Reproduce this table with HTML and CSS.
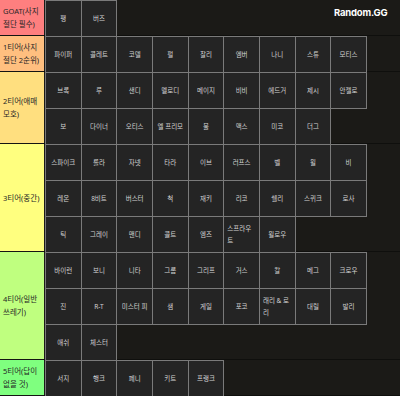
FILE: index.html
```html
<!DOCTYPE html>
<html lang="ko">
<head>
<meta charset="utf-8">
<link rel="stylesheet" href="styles.css">
</head>
<body>
<div class="board">
  <div class="tier">
    <div class="label t-goat">GOAT(사지 절단 필수)</div>
    <div class="items">
      <div class="cell"><span>팽</span></div>
      <div class="cell"><span>버즈</span></div>
    </div>
  </div>
  <div class="tier">
    <div class="label t-1">1티어(사지 절단 2순위)</div>
    <div class="items">
      <div class="cell"><span>파이퍼</span></div>
      <div class="cell"><span>콜레트</span></div>
      <div class="cell"><span>코델</span></div>
      <div class="cell"><span>펄</span></div>
      <div class="cell"><span>찰리</span></div>
      <div class="cell"><span>엠버</span></div>
      <div class="cell"><span>나니</span></div>
      <div class="cell"><span>스튜</span></div>
      <div class="cell"><span>모티스</span></div>
    </div>
  </div>
  <div class="tier">
    <div class="label t-2">2티어(애매 모호)</div>
    <div class="items">
      <div class="cell"><span>브록</span></div>
      <div class="cell"><span>루</span></div>
      <div class="cell"><span>샌디</span></div>
      <div class="cell"><span>멜로디</span></div>
      <div class="cell"><span>메이지</span></div>
      <div class="cell"><span>비비</span></div>
      <div class="cell"><span>에드거</span></div>
      <div class="cell"><span>제시</span></div>
      <div class="cell"><span>안젤로</span></div>
      <div class="cell"><span>보</span></div>
      <div class="cell"><span>다이너</span></div>
      <div class="cell"><span>오티스</span></div>
      <div class="cell"><span>엘 프리모</span></div>
      <div class="cell"><span>불</span></div>
      <div class="cell"><span>맥스</span></div>
      <div class="cell"><span>미코</span></div>
      <div class="cell"><span>더그</span></div>
    </div>
  </div>
  <div class="tier">
    <div class="label t-3">3티어(중간)</div>
    <div class="items">
      <div class="cell"><span>스파이크</span></div>
      <div class="cell"><span>롤라</span></div>
      <div class="cell"><span>자넷</span></div>
      <div class="cell"><span>타라</span></div>
      <div class="cell"><span>이브</span></div>
      <div class="cell"><span>러프스</span></div>
      <div class="cell"><span>벨</span></div>
      <div class="cell"><span>윌</span></div>
      <div class="cell"><span>비</span></div>
      <div class="cell"><span>레온</span></div>
      <div class="cell"><span>8비트</span></div>
      <div class="cell"><span>버스터</span></div>
      <div class="cell"><span>척</span></div>
      <div class="cell"><span>재키</span></div>
      <div class="cell"><span>리코</span></div>
      <div class="cell"><span>쉘리</span></div>
      <div class="cell"><span>스퀴크</span></div>
      <div class="cell"><span>로사</span></div>
      <div class="cell"><span>틱</span></div>
      <div class="cell"><span>그레이</span></div>
      <div class="cell"><span>맨디</span></div>
      <div class="cell"><span>콜트</span></div>
      <div class="cell"><span>엠즈</span></div>
      <div class="cell"><span>스프라우트</span></div>
      <div class="cell"><span>윌로우</span></div>
    </div>
  </div>
  <div class="tier">
    <div class="label t-4">4티어(일반 쓰레기)</div>
    <div class="items">
      <div class="cell"><span>바이런</span></div>
      <div class="cell"><span>보니</span></div>
      <div class="cell"><span>니타</span></div>
      <div class="cell"><span>그롬</span></div>
      <div class="cell"><span>그리프</span></div>
      <div class="cell"><span>거스</span></div>
      <div class="cell"><span>칼</span></div>
      <div class="cell"><span>메그</span></div>
      <div class="cell"><span>크로우</span></div>
      <div class="cell"><span>진</span></div>
      <div class="cell"><span>R-T</span></div>
      <div class="cell"><span>미스터 피</span></div>
      <div class="cell"><span>샘</span></div>
      <div class="cell"><span>게일</span></div>
      <div class="cell"><span>포코</span></div>
      <div class="cell"><span>래리 &amp; 로리</span></div>
      <div class="cell"><span>대릴</span></div>
      <div class="cell"><span>발리</span></div>
      <div class="cell"><span>애쉬</span></div>
      <div class="cell"><span>체스터</span></div>
    </div>
  </div>
  <div class="tier">
    <div class="label t-5">5티어(답이 없을 것)</div>
    <div class="items">
      <div class="cell"><span>서지</span></div>
      <div class="cell"><span>행크</span></div>
      <div class="cell"><span>페니</span></div>
      <div class="cell"><span>키트</span></div>
      <div class="cell"><span>프랭크</span></div>
    </div>
  </div>
  <div class="brand">Random.GG</div>
</div>
</body>
</html>
```

FILE: styles.css
```css
html, body {
  margin: 0;
  padding: 0;
  background: #1b1a17;
}
body {
  width: 400px;
  height: 396px;
  overflow: hidden;
  font-family: "Noto Sans", "Noto Sans CJK KR", sans-serif;
}
.board {
  position: relative;
  width: 400px;
  height: 396px;
}
.tier {
  display: flex;
  background: linear-gradient(to top, #0f0f0d 1px, transparent 1px);
}
.label {
  width: 44px;
  box-sizing: border-box;
  padding: 0 3px;
  display: flex;
  align-items: center;
  font-size: 7.5px;
  line-height: 1.7;
  color: #262626;
  box-shadow: inset 0 -1px 0 #141412;
  word-break: keep-all;
}
.t-goat { background: #fe7f7f; }
.t-1 { background: #ffbf7f; }
.t-2 { background: #ffdf7f; }
.t-3 { background: #ffff7f; }
.t-4 { background: #bfff7f; }
.t-5 { background: #7fff7f; }
.items {
  margin-left: 1px;
  width: 322px;
  display: flex;
  flex-wrap: wrap;
  align-content: flex-start;
}
.cell {
  width: 36.67px;
  height: 37px;
  box-sizing: border-box;
  margin: 0 -1px -1px 0;
  border: 1px solid #7a7a7a;
  background: #242424;
  display: flex;
  align-items: center;
  justify-content: center;
  padding: 0 3px;
  font-size: 6.5px;
  line-height: 1.7;
  color: #d2d2d2;
}
.cell span {
  text-align: left;
}
.brand {
  position: absolute;
  top: 7px;
  left: 334px;
  font-family: Inter, "Noto Sans", sans-serif;
  font-weight: 700;
  font-size: 9.5px;
  letter-spacing: -0.2px;
  color: #ffffff;
}
```
